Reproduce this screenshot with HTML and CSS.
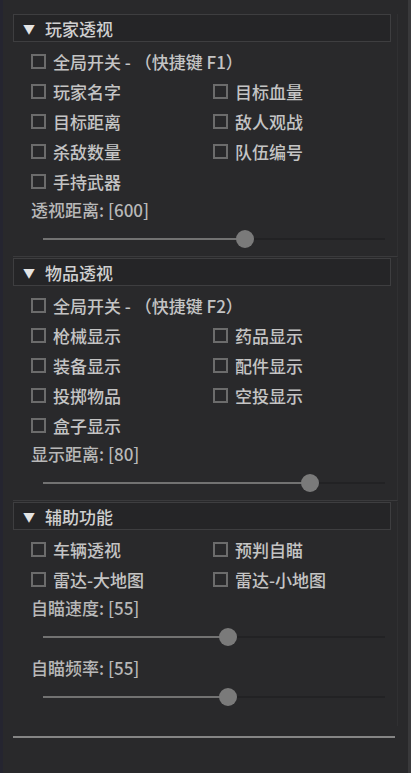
FILE: index.html
```html
<!DOCTYPE html>
<html lang="zh-CN">
<head>
    <meta charset="UTF-8">
    <meta name="viewport" content="width=device-width, initial-scale=1.0">
    <title>菜单</title>
    <link rel="stylesheet" href="styles.css">
</head>
<body>
<div class="window">

    <!-- 玩家透视 -->
    <section class="group">
        <div class="group-head"><span class="arrow">▼</span>玩家透视</div>
        <div class="group-body">
            <label class="check"><span class="box"></span>全局开关 - （快捷键 F1）</label>
            <div class="grid">
                <label class="check"><span class="box"></span>玩家名字</label>
                <label class="check"><span class="box"></span>目标血量</label>
                <label class="check"><span class="box"></span>目标距离</label>
                <label class="check"><span class="box"></span>敌人观战</label>
                <label class="check"><span class="box"></span>杀敌数量</label>
                <label class="check"><span class="box"></span>队伍编号</label>
                <label class="check"><span class="box"></span>手持武器</label>
            </div>
            <div class="value">透视距离: [600]</div>
            <div class="slider">
                <div class="track">
                    <div class="fill" style="width: 59%"></div>
                    <div class="thumb" style="left: 59%"></div>
                </div>
            </div>
        </div>
    </section>

    <!-- 物品透视 -->
    <section class="group">
        <div class="group-head"><span class="arrow">▼</span>物品透视</div>
        <div class="group-body">
            <label class="check"><span class="box"></span>全局开关 - （快捷键 F2）</label>
            <div class="grid">
                <label class="check"><span class="box"></span>枪械显示</label>
                <label class="check"><span class="box"></span>药品显示</label>
                <label class="check"><span class="box"></span>装备显示</label>
                <label class="check"><span class="box"></span>配件显示</label>
                <label class="check"><span class="box"></span>投掷物品</label>
                <label class="check"><span class="box"></span>空投显示</label>
                <label class="check"><span class="box"></span>盒子显示</label>
            </div>
            <div class="value">显示距离: [80]</div>
            <div class="slider">
                <div class="track">
                    <div class="fill" style="width: 78%"></div>
                    <div class="thumb" style="left: 78%"></div>
                </div>
            </div>
        </div>
    </section>

    <!-- 辅助功能 -->
    <section class="group last">
        <div class="group-head"><span class="arrow">▼</span>辅助功能</div>
        <div class="group-body">
            <div class="grid">
                <label class="check"><span class="box"></span>车辆透视</label>
                <label class="check"><span class="box"></span>预判自瞄</label>
                <label class="check"><span class="box"></span>雷达-大地图</label>
                <label class="check"><span class="box"></span>雷达-小地图</label>
            </div>
            <div class="value">自瞄速度: [55]</div>
            <div class="slider">
                <div class="track">
                    <div class="fill" style="width: 54%"></div>
                    <div class="thumb" style="left: 54%"></div>
                </div>
            </div>
            <div class="value">自瞄频率: [55]</div>
            <div class="slider">
                <div class="track">
                    <div class="fill" style="width: 54%"></div>
                    <div class="thumb" style="left: 54%"></div>
                </div>
            </div>
        </div>
    </section>

    <div class="bottom-line"></div>
</div>
</body>
</html>
```

FILE: styles.css
```css
html, body { margin: 0; padding: 0; }
body { background: #29292b; font-family: "Noto Sans CJK SC", "Noto Sans", sans-serif; color: #c4c4c4; }
.window { box-sizing: border-box; width: 411px; height: 773px; padding: 14px 0 0 0; border-left: 3px solid #252530; border-right: 3px solid #39393b; }
.group { margin: 0 10px 0 10px; border-bottom: 1px solid #3a3a3c; border-right: 1px solid #303032; }
.group + .group { margin-top: 1px; }
.group.last { border-bottom: none; padding-bottom: 12px; }
.group-head { display: flex; align-items: center; box-sizing: border-box; width: 378px; height: 28px; background: #252527; border: 1px solid #3e3e40; font-size: 17px; font-weight: 500; color: #d0d0d0; }
.group-head .arrow { font-size: 12px; margin: 0 10px 0 9px; color: #e4e4e4; }
.group-body { padding: 4px 0 0 18px; }
.grid { display: grid; grid-template-columns: 182px 1fr; }
.check { display: flex; align-items: center; height: 30px; font-size: 17px; font-weight: 500; }
.box { box-sizing: border-box; width: 15px; height: 15px; border: 2px solid #6c6c6c; margin-right: 7px; flex-shrink: 0; }
.value { display: flex; align-items: center; height: 26px; font-size: 17px; font-weight: 500; color: #b8b8b8; }
.slider { display: flex; align-items: center; height: 34px; padding: 0 0 0 12px; }
.track { position: relative; width: 342px; height: 2px; background: #222224; }
.fill { height: 2px; background: #727272; }
.thumb { position: absolute; top: -8px; width: 18px; height: 18px; margin-left: -9px; border-radius: 50%; background: #7a7a7a; }
.bottom-line { margin: 10px 13px 0 10px; height: 2px; background: #858585; }
```
